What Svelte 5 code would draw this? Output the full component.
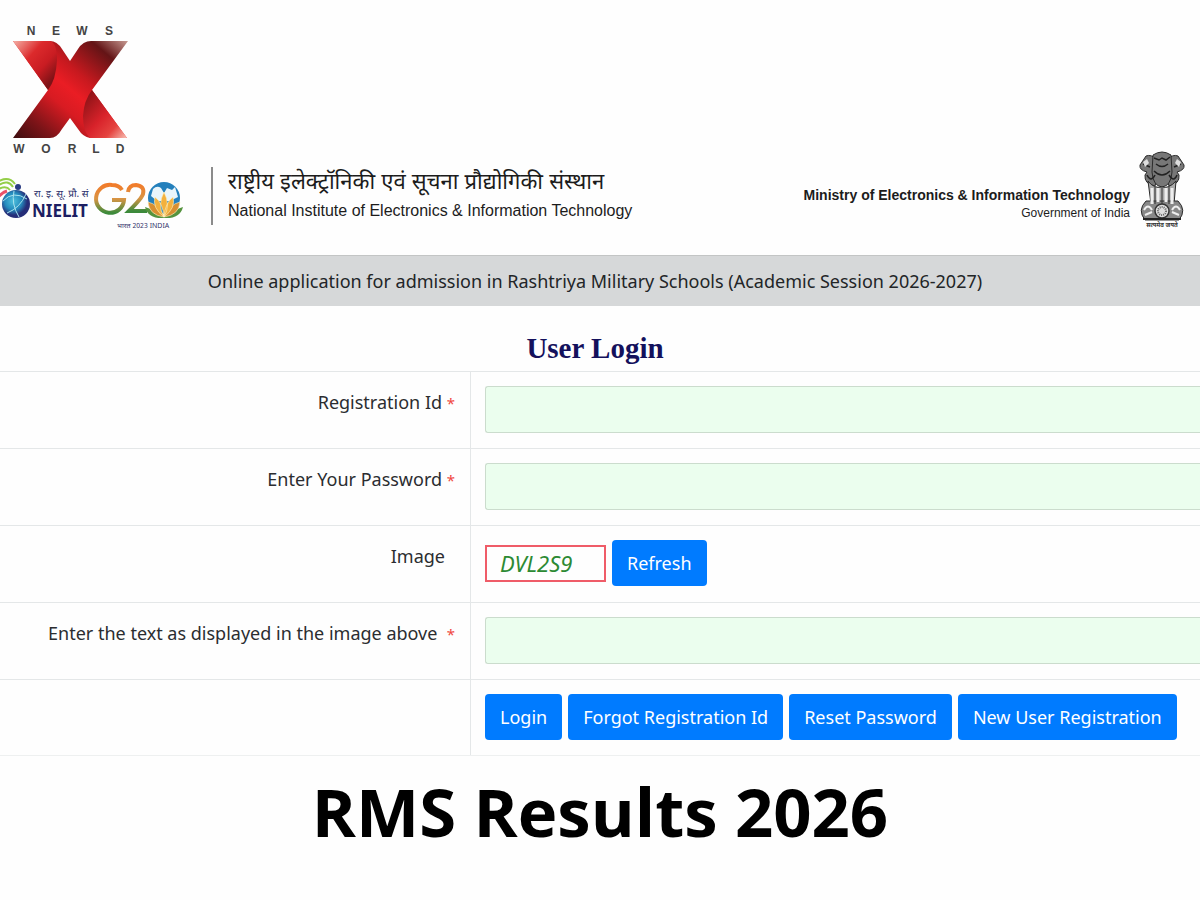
<script lang="ts">
  const fields = [
    { id: 'registration', label: 'Registration Id', type: 'text' },
    { id: 'password', label: 'Enter Your Password', type: 'password' }
  ];
  const actions = ['Login', 'Forgot Registration Id', 'Reset Password', 'New User Registration'];

  let values = $state<Record<string, string>>({ registration: '', password: '', captcha: '' });
</script>

<div class="page">
  <a class="brand" href="/" aria-label="News X World">
    <svg viewBox="0 0 150 150" width="150" height="150">
      <defs>
        <linearGradient id="body" x1="1" y1="0" x2="0" y2="1">
          <stop offset="0" stop-color="#c79a92" />
          <stop offset="0.16" stop-color="#641416" />
          <stop offset="0.38" stop-color="#c8191f" />
          <stop offset="0.5" stop-color="#ea1d24" />
          <stop offset="0.62" stop-color="#d81b22" />
          <stop offset="0.82" stop-color="#7d1418" />
          <stop offset="1" stop-color="#3d0d0f" />
        </linearGradient>
        <linearGradient id="armTop" x1="0" y1="0" x2="1" y2="1">
          <stop offset="0" stop-color="#f4b0a6" />
          <stop offset="0.35" stop-color="#dc2a2c" />
          <stop offset="0.6" stop-color="#c91c22" />
          <stop offset="0.85" stop-color="#7d1216" />
        </linearGradient>
        <linearGradient id="armBottom" x1="0" y1="0" x2="1" y2="1">
          <stop offset="0.1" stop-color="#8e1317" />
          <stop offset="0.5" stop-color="#d8222a" />
          <stop offset="0.75" stop-color="#e5433f" />
          <stop offset="1" stop-color="#f7c0b4" />
        </linearGradient>
      </defs>
      <path d="M13 31H50Q57 31 62 39L70 51L78 39Q83 31 91 31H128L92 80L127 128H90Q83 127 78 119L70 108L62 119Q57 128 50 128H13L48 80Z" fill="url(#body)" />
      <path d="M13 31H50Q57 33 57 50Q56 70 48 80Z" fill="url(#armTop)" />
      <path d="M92 80Q84 90 83 106Q83 122 90 128H127Z" fill="url(#armBottom)" />
      <g class="brand-text">
        <text x="31" y="25" text-anchor="middle">N</text>
        <text x="56" y="25" text-anchor="middle">E</text>
        <text x="82" y="25" text-anchor="middle">W</text>
        <text x="109" y="25" text-anchor="middle">S</text>
        <text x="19" y="143" text-anchor="middle">W</text>
        <text x="46" y="143" text-anchor="middle">O</text>
        <text x="72" y="143" text-anchor="middle">R</text>
        <text x="96" y="143" text-anchor="middle">L</text>
        <text x="120" y="143" text-anchor="middle">D</text>
      </g>
    </svg>
  </a>

  <header>
    <svg class="partners" viewBox="0 0 190 66" width="190" height="66" role="img" aria-label="NIELIT and G20">
      <defs>
        <radialGradient id="globe" cx="0.4" cy="0.4">
          <stop offset="0" stop-color="#4fc0dc" />
          <stop offset="0.6" stop-color="#248bbd" />
          <stop offset="1" stop-color="#252d78" />
        </radialGradient>
        <linearGradient id="tricolor" x1="0" y1="0" x2="0" y2="1">
          <stop offset="0" stop-color="#f17c2b" />
          <stop offset="0.5" stop-color="#d99444" />
          <stop offset="1" stop-color="#3c8a3b" />
        </linearGradient>
      </defs>
      <path d="M-1 21Q6 17 10 22M-1 17Q8 11 13 19M-1 13Q9 8 15 16" fill="none" stroke="#94ce48" stroke-width="2" />
      <path d="M-2 29Q3 24 7 23" fill="none" stroke="#ea5269" stroke-width="3" />
      <circle cx="16" cy="36" r="14" fill="url(#globe)" />
      <path d="M3 33Q13 22 27 31M7 45Q20 40 26 26M14 23Q11 36 19 49" fill="none" stroke="#a8e2ee" stroke-width="1" />
      <circle cx="18" cy="19" r="3" fill="#2a3c83" />
      <text class="nielit-hi" x="34" y="29">रा. इ. सू. प्रौ. सं</text>
      <text class="nielit" x="32" y="49">NIELIT</text>

      <path d="M122 22Q119 17 112 17A14 14 0 1 0 124 32H112" fill="none" stroke="url(#tricolor)" stroke-width="4" />
      <path d="M128 24Q129 17 136 17Q145 18 143 26Q142 30 129 43H147" fill="none" stroke="url(#tricolor)" stroke-width="4" />
      <circle cx="164" cy="30" r="16" fill="#2480bc" />
      <path d="M151 28L153 21Q157 17 161 20L164 25L167 20L172 22L175 19L178 29L170 33H157Z" fill="#e9f5fb" />
      <path d="M145 39Q155 42 164 49Q173 42 183 39Q180 51 164 50Q148 51 145 39Z" fill="#55933e" />
      <path d="M164 49Q149 47 148 34Q158 36 164 49ZM164 49Q179 47 180 34Q170 36 164 49Z" fill="#d88f31" stroke="#fff1c2" stroke-width="0.6" />
      <path d="M164 49Q152 40 155 29Q163 35 164 49ZM164 49Q176 40 173 29Q165 35 164 49ZM164 24Q157 37 164 49Q171 37 164 24Z" fill="#f3b13e" stroke="#fff1c2" stroke-width="0.6" />
      <text class="g20-hi" x="117" y="60">भारत 2023 INDIA</text>
    </svg>
    <div class="institute">
      <p class="hindi" lang="hi">राष्ट्रीय इलेक्ट्रॉनिकी एवं सूचना प्रौद्योगिकी संस्थान</p>
      <p class="english">National Institute of Electronics &amp; Information Technology</p>
    </div>
    <div class="ministry">
      <strong>Ministry of Electronics &amp; Information Technology</strong>
      <span>Government of India</span>
    </div>
    <svg class="emblem" viewBox="0 0 48 84" width="48" height="84" role="img" aria-label="Emblem of India">
      <g fill="#777" stroke="#2b2b2b" stroke-width="1">
        <path d="M9 22Q1 20 2 15L8 6Q13 4 18 9L20 25L17 36Q6 34 7 25Z" />
        <path d="M39 22Q47 20 46 15L40 6Q35 4 30 9L28 25L31 36Q42 34 41 25Z" />
        <path d="M15 5Q24 -1 33 5L34 22Q33 36 24 37Q15 36 14 22Z" />
        <path d="M10 31L13 54H36L38 31Q31 39 24 37Q16 39 10 31Z" fill="#aaa" />
        <path d="M8 51H40Q49 60 41 70H7Q-1 60 8 51Z" fill="#888" />
      </g>
      <path d="M16 8L21 10L24 8L28 10L32 7M18 14Q24 19 30 14M5 14L12 17M43 14L36 17M16 21Q24 29 32 21M9 25Q13 33 17 25M31 25Q36 33 39 25" fill="none" stroke="#222" stroke-width="1.5" />
      <path d="M5 12L9 9L11 13L7 17ZM43 12L39 9L37 13L41 17Z" fill="#ddd" />
      <path d="M14 38V54M20 38V52M28 38V52M34 38V54" stroke="#eee" stroke-width="3" />
      <path d="M17 37V54M24 38V54M31 37V54" stroke="#333" stroke-width="1" />
      <circle cx="24" cy="61" r="7" fill="#ddd" stroke="#333" stroke-width="1.5" />
      <circle cx="24" cy="61" r="4" fill="none" stroke="#666" stroke-width="2" stroke-dasharray="1 1" />
      <path d="M6 60Q10 53 14 60M42 60Q38 53 34 60M7 65L14 62M41 65L34 62" fill="none" stroke="#eee" stroke-width="2" />
      <path d="M5 69H43" fill="none" stroke="#222" stroke-width="2" />
      <text class="motto" x="24" y="77" text-anchor="middle">सत्यमेव जयते</text>
    </svg>
  </header>

  <div class="banner">Online application for admission in Rashtriya Military Schools (Academic Session 2026-2027)</div>

  <main>
    <h1>User Login</h1>
    <form onsubmit={(e) => e.preventDefault()}>
      {#each fields as field (field.id)}
        <div class="row">
          <label class="label" for={field.id}>{field.label} <span class="required">*</span></label>
          <div class="control">
            <input id={field.id} type={field.type} bind:value={values[field.id]} />
          </div>
        </div>
      {/each}
      <div class="row">
        <div class="label image-label">Image</div>
        <div class="control">
          <span class="captcha">DVL2S9</span>
          <button type="button">Refresh</button>
        </div>
      </div>
      <div class="row">
        <label class="label" for="captcha">Enter the text as displayed in the image above &nbsp;<span class="required">*</span></label>
        <div class="control">
          <input id="captcha" type="text" bind:value={values.captcha} />
        </div>
      </div>
      <div class="row">
        <div class="label"></div>
        <div class="control">
          {#each actions as action, i}
            <button type={i === 0 ? 'submit' : 'button'}>{action}</button>
          {/each}
        </div>
      </div>
    </form>
  </main>

  <h2>RMS Results 2026</h2>
</div>

<style>
  :global(body) {
    margin: 0;
    background: #fefefe;
  }
  .page {
    overflow: hidden;
    padding-top: 10px;
    font-family: 'Noto Sans', 'Open Sans', sans-serif;
    font-size: 18px;
    color: #2b2d30;
  }
  .page * {
    box-sizing: border-box;
  }

  .brand {
    display: block;
    width: 150px;
    height: 140px;
  }
  .brand svg {
    display: block;
  }
  .brand-text {
    font: 700 12px 'Liberation Sans', sans-serif;
    fill: #444;
  }

  header {
    display: flex;
    align-items: flex-start;
    height: 105px;
    padding-right: 14px;
    font-family: 'Liberation Sans', 'Noto Sans Devanagari', sans-serif;
    color: #1c1c1c;
  }
  .partners {
    flex-shrink: 0;
    margin: 18px 21px 0 0;
  }
  .nielit-hi {
    font: 10px 'Noto Sans Devanagari', sans-serif;
    fill: #2d326d;
  }
  .nielit {
    font: 700 17px 'Noto Sans', sans-serif;
    fill: #1d1f63;
  }
  .g20-hi {
    font: 7px 'Noto Sans Devanagari', sans-serif;
    fill: #33356b;
  }

  .institute {
    height: 58px;
    margin-top: 17px;
    padding-left: 15px;
    border-left: 2px solid #8b8b8b;
    white-space: nowrap;
  }
  .institute p {
    margin: 0;
  }
  .hindi {
    font-size: 22px;
    line-height: 30px;
  }
  .english {
    font-size: 16px;
    line-height: 28px;
  }

  .ministry {
    display: flex;
    flex-direction: column;
    align-items: flex-end;
    margin: 36px 8px 0 auto;
    font-size: 12px;
    line-height: 18px;
    white-space: nowrap;
  }
  .ministry strong {
    font-size: 14px;
  }
  .emblem {
    flex-shrink: 0;
  }
  .motto {
    font: 700 6px 'Noto Sans Devanagari', sans-serif;
    fill: #333;
  }

  .banner {
    padding: 12px 10px 12px 0;
    border-top: 1px solid #c3c5c5;
    background: #d6d8d9;
    line-height: 26px;
    text-align: center;
    color: #222527;
  }

  h1 {
    margin: 0;
    padding: 25px 10px 6px 0;
    font: 700 29px/34px 'Liberation Serif', serif;
    text-align: center;
    color: #14115c;
  }

  .row {
    display: grid;
    grid-template-columns: 47fr 73fr;
    min-height: 77px;
    border-top: 1px solid #e4e7e8;
  }
  .row:last-child {
    border-bottom: 1px solid #eef0f0;
  }
  .label {
    padding: 17px 15px 0 0;
    line-height: 26px;
    text-align: right;
  }
  .image-label {
    padding-right: 25px;
  }
  .required {
    font-size: 15px;
    color: #f0483e;
  }
  .control {
    display: flex;
    align-items: flex-start;
    gap: 6px;
    padding: 14px 0 0 14px;
    border-left: 1px solid #e4e7e8;
  }
  input {
    width: 100%;
    height: 47px;
    padding: 0 12px;
    border: 1px solid #cbdccd;
    border-right: none;
    border-radius: 3px 0 0 3px;
    background: #ebfeee;
    font: inherit;
  }
  button {
    height: 46px;
    padding: 0 15px;
    border: none;
    border-radius: 4px;
    background: #007bff;
    font: inherit;
    color: #fff;
    white-space: nowrap;
  }
  .captcha {
    width: 121px;
    margin-top: 5px;
    padding-left: 13px;
    border: 2px solid #ef5c68;
    font-size: 22px;
    font-style: italic;
    line-height: 33px;
    color: #2c8a33;
  }

  h2 {
    margin: 0;
    padding: 12px 0 36px;
    font: 700 67px/86px 'Open Sans', 'Noto Sans', sans-serif;
    text-align: center;
    color: #000;
  }
</style>
